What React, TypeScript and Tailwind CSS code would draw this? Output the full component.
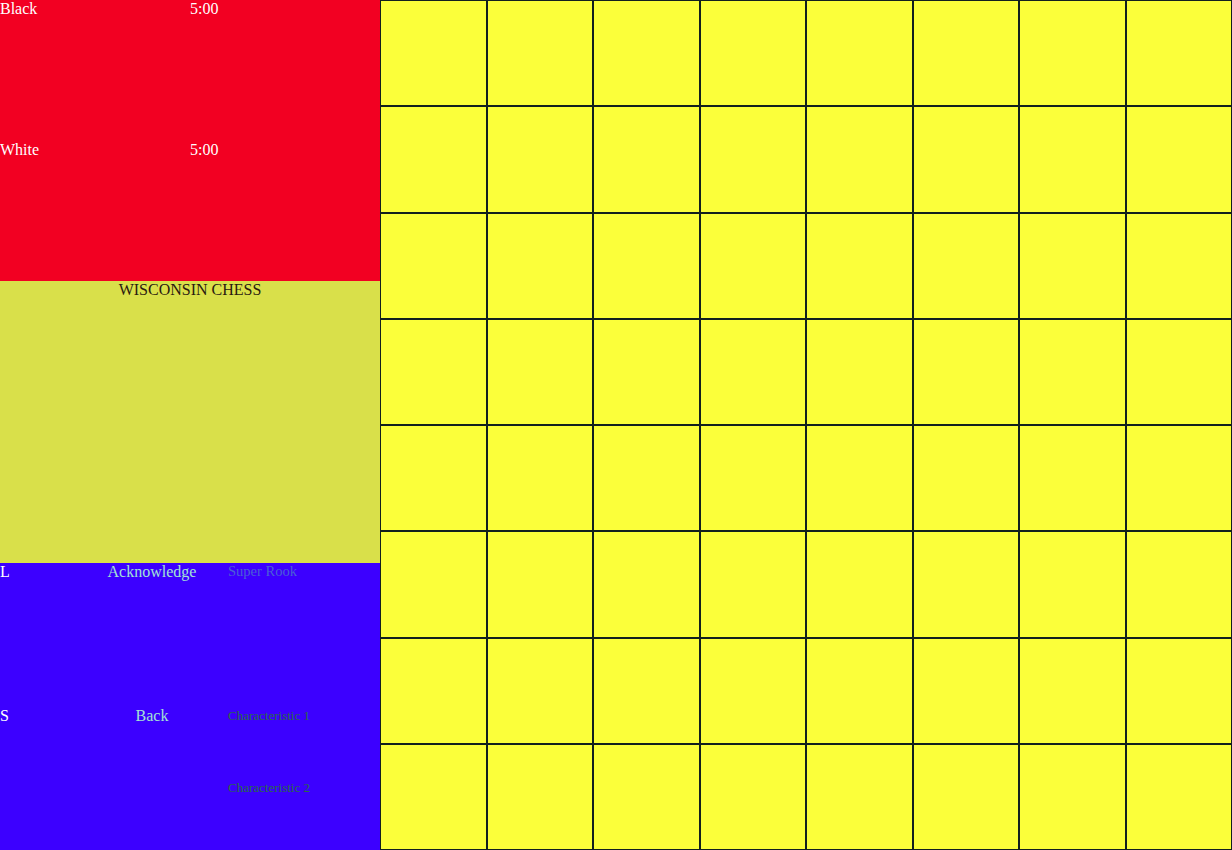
import React from "react";

export default function App() {
  const cells = Array.from({ length: 64 }, (_, i) => i);
  return (
    <div className="flex w-[1232px] h-[850px] overflow-hidden text-[16px] leading-[18px]" style={{ fontFamily: '"Liberation Serif", "Times New Roman", serif' }}>
      <div className="flex flex-col w-[380px] h-full shrink-0">
        <div className="grid grid-cols-2 grid-rows-2 h-[281px] bg-[#f20022] text-white">
          <div>Black</div>
          <div>5:00</div>
          <div>White</div>
          <div>5:00</div>
        </div>
        <div className="h-[282px] bg-[#d9e04a] text-[#2a1a10] text-center">WISCONSIN CHESS</div>
        <div className="grid grid-cols-[76px_152px_152px] h-[287px] bg-[#3c00ff]">
          <div className="grid grid-rows-2 text-white">
            <div>L</div>
            <div>S</div>
          </div>
          <div className="grid grid-rows-2 text-center text-[#a4e2d4]">
            <div>Acknowledge</div>
            <div>Back</div>
          </div>
          <div className="grid grid-rows-4 text-[13px] leading-[16px]">
            <div className="text-[#4b5fd6] text-[14.5px] leading-[17px]">Super Rook</div>
            <div></div>
            <div className="text-[#2a6a48] pt-[1px]">Characteristic 1</div>
            <div className="text-[#2a6a48] pt-[2px]">Characteristic 2</div>
          </div>
        </div>
      </div>
      <div className="grid grid-cols-8 grid-rows-8 flex-1 h-full bg-[#fbff3a]">
        {cells.map((i) => (
          <div key={i} className="border border-[#12201e] bg-[#fbff3a]" />
        ))}
      </div>
    </div>
  );
}
